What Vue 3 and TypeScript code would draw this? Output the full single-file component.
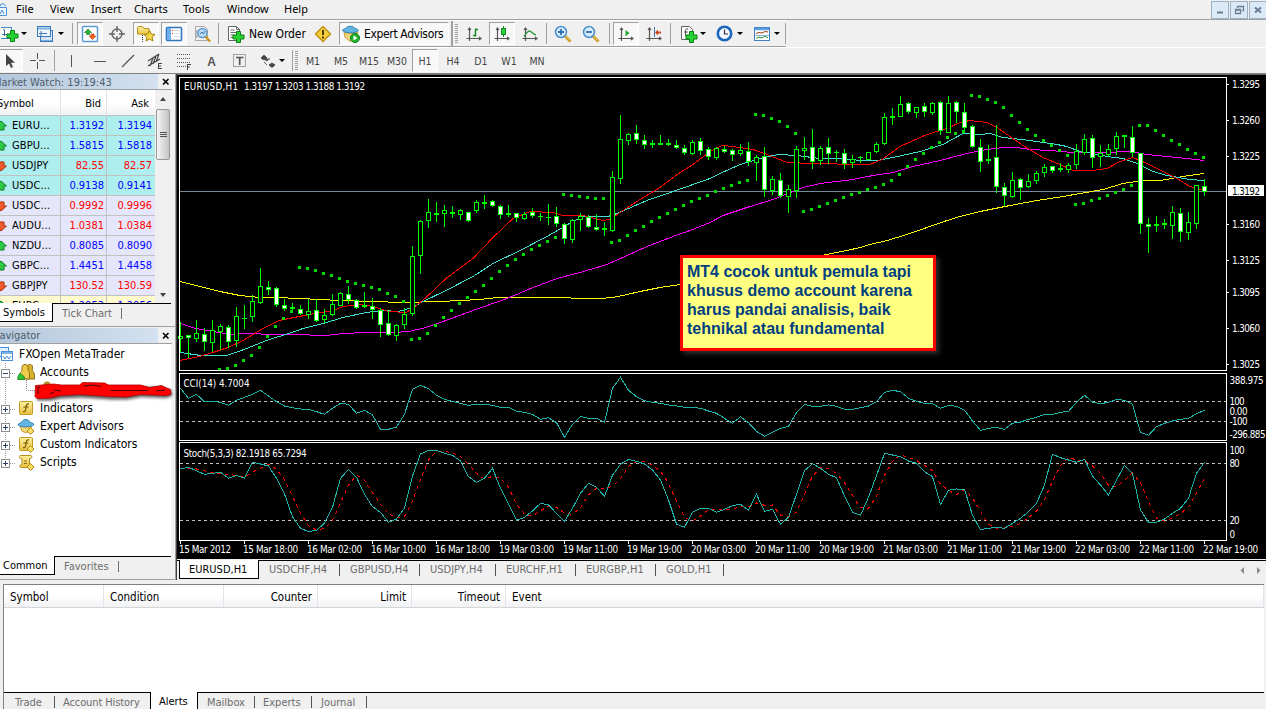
<script setup lang="ts">
import { computed } from 'vue'

interface Tool {
  icon?: string
  label?: string
  kind?: 'sep' | 'caret' | 'grip' | 'edge'
  gap?: number
  w: number
  on?: boolean
}

interface Quote {
  symbol: string
  bid: string
  ask: string
  up: boolean
  tone: string
}

// high, body top, body bottom, low, direction
type Candle = [number, number, number, number, 'u' | 'd' | 'x']

const menu = ['File', 'View', 'Insert', 'Charts', 'Tools', 'Window', 'Help']

const mainTools: Tool[] = [
  { icon: 'new-chart', w: 20 },
  { kind: 'caret', w: 8 },
  { icon: 'profiles', gap: 8, w: 18 },
  { kind: 'caret', gap: 3, w: 8 },
  { kind: 'sep', gap: 7, w: 1 },
  { icon: 'market', gap: 4, w: 26, on: true },
  { icon: 'target', gap: 5, w: 18 },
  { icon: 'folder', gap: 7, w: 26, on: true },
  { icon: 'terminal', gap: 2, w: 26, on: true },
  { icon: 'tester', gap: 6, w: 18 },
  { kind: 'sep', gap: 7, w: 1 },
  { icon: 'order', gap: 8, w: 18 },
  { label: 'New Order', gap: 4, w: 57 },
  { icon: 'warn', gap: 8, w: 18 },
  { icon: 'expert', label: 'Expert Advisors', gap: 7, w: 110, on: true },
  { kind: 'edge', gap: 2, w: 2 },
  { kind: 'grip', gap: 2, w: 3 },
  { icon: 'bars', gap: 7, w: 18 },
  { icon: 'candles', gap: 6, w: 26, on: true },
  { icon: 'line', gap: 6, w: 18 },
  { kind: 'sep', gap: 7, w: 1 },
  { icon: 'zoom-in', gap: 7, w: 18 },
  { icon: 'zoom-out', gap: 10, w: 18 },
  { kind: 'sep', gap: 9, w: 1 },
  { icon: 'scroll', gap: 3, w: 26, on: true },
  { icon: 'shift', gap: 6, w: 18 },
  { kind: 'sep', gap: 7, w: 1 },
  { icon: 'indicators', gap: 9, w: 18 },
  { kind: 'caret', gap: 1, w: 8 },
  { icon: 'clock', gap: 9, w: 18 },
  { kind: 'caret', gap: 2, w: 8 },
  { icon: 'template', gap: 9, w: 18 },
  { kind: 'caret', gap: 2, w: 8 },
  { kind: 'sep', gap: 4, w: 1 },
]

const drawTools: Tool[] = [
  { icon: 'cursor', gap: -4, w: 27, on: true },
  { icon: 'cross', gap: 6, w: 18 },
  { kind: 'sep', gap: 7, w: 1 },
  { icon: 'vline', gap: 7, w: 18 },
  { icon: 'hline', gap: 11, w: 18 },
  { icon: 'trend', gap: 10, w: 18 },
  { icon: 'channel', gap: 9, w: 18 },
  { icon: 'fibo', gap: 11, w: 18 },
  { icon: 'text', gap: 9, w: 18 },
  { icon: 'textlabel', gap: 11, w: 18 },
  { icon: 'arrows', gap: 10, w: 18 },
  { kind: 'caret', gap: 1, w: 8 },
  { kind: 'sep', gap: 6, w: 1 },
  { kind: 'grip', gap: 2, w: 3 },
]

const periods = ['M1', 'M5', 'M15', 'M30', 'H1', 'H4', 'D1', 'W1', 'MN']

const quotes: Quote[] = [
  { symbol: 'EURU...', bid: '1.3192', ask: '1.3194', up: true, tone: 'cyan' },
  { symbol: 'GBPU...', bid: '1.5815', ask: '1.5818', up: true, tone: 'cyan' },
  { symbol: 'USDJPY', bid: '82.55', ask: '82.57', up: false, tone: 'cyan' },
  { symbol: 'USDC...', bid: '0.9138', ask: '0.9141', up: true, tone: 'cyan' },
  { symbol: 'USDC...', bid: '0.9992', ask: '0.9996', up: false, tone: 'lavender' },
  { symbol: 'AUDU...', bid: '1.0381', ask: '1.0384', up: false, tone: 'lavender' },
  { symbol: 'NZDU...', bid: '0.8085', ask: '0.8090', up: true, tone: 'lavender' },
  { symbol: 'GBPC...', bid: '1.4451', ask: '1.4458', up: true, tone: 'lavender' },
  { symbol: 'GBPJPY', bid: '130.52', ask: '130.59', up: false, tone: 'lavender' },
  { symbol: 'EURC...', bid: '1.2053', ask: '1.2056', up: true, tone: 'lemon' },
]

const tree = [
  { label: 'Indicators', icon: 'fx' },
  { label: 'Expert Advisors', icon: 'hat' },
  { label: 'Custom Indicators', icon: 'fx-custom' },
  { label: 'Scripts', icon: 'script' },
]

const chartTabs = [
  { label: 'USDCHF,H4', w: 81 },
  { label: 'GBPUSD,H4', w: 80 },
  { label: 'USDJPY,H4', w: 76 },
  { label: 'EURCHF,H1', w: 80 },
  { label: 'EURGBP,H1', w: 80 },
  { label: 'GOLD,H1', w: 68 },
]

const alertCols = ['Symbol', 'Condition', 'Counter', 'Limit', 'Timeout', 'Event']

const STEP = 8
const X0 = 180

const candles: Candle[] = [
  [322, 336, 339, 352, 'u'], [335, 335, 338, 358, 'd'], [320, 333, 339, 342, 'u'], [328, 334, 342, 351, 'd'],
  [320, 330, 343, 352, 'u'], [324, 326, 332, 350, 'u'], [325, 327, 342, 348, 'd'], [307, 316, 341, 347, 'u'],
  [305, 318, 319, 329, 'x'], [295, 301, 317, 322, 'u'], [268, 286, 303, 304, 'u'], [281, 287, 290, 295, 'd'],
  [287, 288, 305, 307, 'd'], [299, 305, 309, 311, 'd'], [303, 307, 309, 312, 'x'], [305, 309, 314, 315, 'd'],
  [299, 311, 315, 319, 'u'], [299, 310, 321, 322, 'd'], [309, 315, 320, 323, 'u'], [294, 304, 315, 316, 'u'],
  [292, 293, 306, 306, 'u'], [286, 294, 300, 304, 'd'], [299, 300, 308, 309, 'd'], [292, 305, 307, 308, 'x'],
  [298, 306, 310, 319, 'd'], [308, 310, 325, 337, 'd'], [310, 323, 335, 336, 'd'], [324, 325, 336, 341, 'u'],
  [308, 314, 325, 329, 'u'], [246, 256, 314, 316, 'u'], [220, 221, 256, 274, 'u'], [199, 212, 221, 228, 'u'],
  [202, 213, 215, 222, 'x'], [205, 210, 214, 227, 'u'], [206, 212, 214, 218, 'x'], [209, 210, 215, 220, 'u'],
  [212, 212, 221, 222, 'd'], [200, 202, 211, 213, 'u'], [195, 202, 204, 209, 'x'], [200, 201, 206, 207, 'd'],
  [205, 206, 215, 219, 'd'], [205, 213, 215, 217, 'x'], [213, 213, 218, 222, 'd'], [212, 214, 219, 220, 'u'],
  [208, 212, 216, 218, 'd'], [213, 216, 217, 221, 'x'], [204, 217, 218, 225, 'x'], [207, 216, 224, 227, 'd'],
  [223, 224, 239, 244, 'd'], [219, 220, 240, 243, 'u'], [213, 216, 220, 231, 'u'], [215, 217, 227, 228, 'd'],
  [214, 227, 230, 231, 'd'], [222, 228, 230, 236, 'x'], [171, 177, 231, 232, 'u'], [115, 139, 179, 184, 'u'],
  [133, 134, 141, 145, 'u'], [125, 133, 140, 144, 'd'], [135, 140, 145, 149, 'd'], [140, 143, 145, 148, 'x'],
  [135, 143, 145, 145, 'x'], [139, 143, 145, 146, 'x'], [140, 145, 148, 149, 'd'], [145, 148, 153, 155, 'd'],
  [140, 142, 154, 155, 'u'], [138, 141, 151, 155, 'd'], [147, 149, 157, 160, 'd'], [147, 148, 158, 160, 'u'],
  [146, 149, 152, 153, 'd'], [149, 150, 155, 161, 'd'], [144, 150, 154, 156, 'u'], [142, 151, 162, 166, 'd'],
  [155, 157, 163, 181, 'u'], [147, 156, 190, 197, 'd'], [176, 179, 191, 195, 'u'], [173, 180, 196, 198, 'd'],
  [185, 189, 197, 213, 'u'], [146, 149, 191, 198, 'u'], [137, 148, 151, 160, 'u'], [129, 147, 162, 169, 'd'],
  [146, 148, 161, 165, 'u'], [138, 147, 154, 164, 'd'], [150, 152, 153, 162, 'x'], [149, 153, 164, 169, 'd'],
  [155, 159, 163, 168, 'u'], [156, 157, 158, 163, 'x'], [152, 152, 160, 160, 'u'], [142, 144, 152, 153, 'u'],
  [113, 117, 144, 145, 'u'], [108, 116, 118, 125, 'x'], [96, 104, 117, 117, 'u'], [102, 103, 112, 114, 'd'],
  [107, 107, 113, 118, 'u'], [103, 106, 112, 117, 'd'], [102, 103, 113, 115, 'u'], [101, 102, 131, 135, 'd'],
  [96, 103, 133, 133, 'u'], [101, 102, 112, 123, 'd'], [103, 112, 128, 130, 'd'], [125, 126, 147, 148, 'd'],
  [139, 147, 162, 172, 'd'], [145, 159, 161, 164, 'x'], [125, 157, 187, 193, 'd'], [183, 187, 196, 206, 'd'],
  [172, 180, 197, 198, 'u'], [178, 179, 188, 200, 'd'], [174, 181, 187, 188, 'u'], [171, 173, 181, 184, 'u'],
  [164, 167, 173, 177, 'u'], [166, 166, 171, 173, 'd'], [163, 168, 170, 172, 'x'], [163, 165, 170, 173, 'u'],
  [144, 151, 165, 169, 'u'], [134, 139, 153, 155, 'u'], [135, 138, 158, 168, 'd'], [145, 153, 157, 167, 'u'],
  [144, 149, 155, 157, 'u'], [132, 136, 149, 155, 'u'], [135, 135, 137, 148, 'x'], [126, 137, 153, 157, 'd'],
  [153, 153, 224, 234, 'd'], [218, 224, 227, 253, 'd'], [216, 224, 226, 232, 'x'], [219, 223, 225, 229, 'x'],
  [206, 212, 226, 239, 'u'], [208, 213, 232, 242, 'd'], [212, 222, 233, 240, 'u'], [185, 185, 224, 229, 'u'],
  [179, 186, 192, 196, 'd'],
]

// one entry per bar starting at bar 5
const sar = [
  369, 368, 365, 360, 355, 347, 336, 326, 318, 311, 267, 268, 270, 273, 275, 278, 281, 283, 285, 287, 289, 293, 296, 301,
  339, 338, 333, 325, 317, 310, 303, 297, 291, 285, 278, 271, 265, 259, 254, 249, 245, 241, 237, 194, 195, 196, 197, 198,
  198, 242, 240, 235, 230, 226, 221, 217, 213, 209, 205, 201, 198, 195, 191, 188, 185, 182, 180, 114, 115, 118, 121, 126,
  133, 211, 209, 206, 203, 200, 197, 194, 192, 189, 187, 184, 180, 174, 166, 159, 153, 147, 142, 137, 133, 131, 95, 96,
  99, 102, 107, 115, 122, 129, 135, 140, 145, 150, 155, 204, 203, 200, 198, 195, 192, 189, 185, 125, 125, 130, 135, 140,
  144, 149, 153, 157,
]

const averages = [
  {
    color: '#ffff00',
    points:
      '180,281 200,286 220,291 240,295 260,297 276,297 300,298 320,299 340,300 376,301 400,302 440,301 480,299 497,297 569,297 573,298 600,298 613,297 627,294 640,291 660,287 680,284 740,274 790,263 826,254 847,250 860,247 870,244 887,240 907,234 927,227 947,220 960,216 980,211 1010,205 1037,200 1063,196 1103,189 1123,183 1143,180 1160,180 1183,176 1204,173',
  },
  {
    color: '#ff00ff',
    points:
      '180,323 196,328 213,331 231,334 243,333 256,333 266,334 303,334 316,335 326,335 343,333 366,332 393,332 409,331 426,327 446,320 473,310 507,298 533,287 557,278 580,272 607,264 627,255 647,246 673,236 690,230 710,222 723,215 750,206 773,199 788,193 803,187 820,183 853,179 873,175 893,172 913,166 940,160 963,154 980,150 1003,147 1017,147 1030,149 1050,150 1073,152 1103,152 1130,151 1147,154 1167,156 1187,158 1204,160',
  },
  {
    color: '#40e0d0',
    points:
      '180,352 201,355 226,355 236,352 249,347 269,339 289,333 303,328 323,323 343,317 366,312 383,310 398,311 413,307 421,302 446,290 473,276 493,263 520,250 547,236 573,221 583,216 608,216 617,213 647,200 673,191 710,178 720,173 740,164 760,158 778,154 797,155 820,158 843,158 860,160 877,160 893,157 920,151 943,144 963,133 980,134 990,133 1003,137 1030,140 1057,144 1067,146 1080,151 1093,153 1107,156 1123,158 1137,163 1153,171 1167,175 1190,179 1204,180',
  },
  {
    color: '#ff0000',
    points:
      '180,360 199,356 213,352 228,347 243,340 263,328 279,320 309,314 333,310 343,306 359,304 373,306 389,311 406,312 414,307 426,297 446,278 473,258 493,237 513,218 530,211 553,212 563,215 583,215 603,220 610,219 620,212 640,199 660,187 677,174 693,164 710,151 722,145 733,146 753,149 767,154 787,162 813,163 860,164 870,164 882,159 900,146 927,134 947,128 960,122 970,120 987,122 997,127 1007,134 1023,145 1043,157 1060,164 1073,170 1093,170 1107,168 1120,161 1133,157 1147,163 1167,173 1177,178 1190,186 1204,190',
  },
]

// oscillator samples, three units per pixel measured from OSC_TOP
const OSC_TOP = 370
const cci = [
  55, 85, 73, 96, 94, 97, 106, 91, 82, 73, 61, 78, 95, 108, 113, 117, 118, 125, 133, 115, 100, 103, 130, 121, 135, 178,
  178, 171, 133, 58, 46, 56, 76, 88, 94, 100, 106, 103, 103, 106, 112, 112, 124, 127, 133, 148, 143, 158, 202, 163, 139,
  145, 145, 157, 55, 22, 61, 80, 92, 97, 100, 105, 108, 112, 112, 115, 123, 130, 145, 160, 140, 158, 184, 199, 187, 175,
  169, 128, 103, 109, 109, 105, 109, 118, 118, 113, 108, 95, 67, 61, 65, 85, 94, 100, 101, 115, 106, 109, 121, 153, 181,
  175, 172, 178, 160, 156, 148, 142, 133, 133, 127, 124, 97, 76, 96, 101, 97, 88, 91, 103, 187, 196, 170, 160, 153, 148,
  145, 131, 121,
]
const stoch = [
  297, 292, 302, 313, 310, 307, 325, 316, 325, 277, 282, 288, 325, 372, 440, 475, 485, 481, 460, 412, 325, 298, 322, 373,
  410, 427, 457, 447, 415, 318, 252, 241, 241, 250, 256, 273, 320, 337, 325, 295, 355, 403, 451, 442, 423, 400, 405, 430,
  454, 415, 370, 340, 352, 379, 316, 283, 268, 274, 282, 300, 330, 390, 462, 472, 427, 415, 415, 427, 418, 407, 403, 421,
  373, 424, 418, 463, 442, 373, 302, 281, 295, 313, 323, 378, 427, 436, 382, 317, 250, 255, 260, 273, 280, 305, 320, 403,
  361, 357, 358, 436, 479, 475, 472, 475, 460, 445, 425, 400, 345, 253, 263, 270, 277, 268, 318, 345, 375, 330, 286, 310,
  420, 457, 457, 447, 430, 415, 385, 310, 277,
]

function toPoints(values: number[]): string {
  return values.map((v, i) => `${X0 + i * STEP + 0.5},${(OSC_TOP + v / 3).toFixed(1)}`).join(' ')
}

const cciPoints = computed(() => toPoints(cci))
const stochPoints = computed(() => toPoints(stoch))
const signalPoints = computed(() =>
  toPoints(
    stoch.map((v, i) => {
      const a = stoch[Math.max(0, i - 1)]
      const b = stoch[Math.max(0, i - 2)]
      return (v + a + b) / 3
    }),
  ),
)

const bars = computed(() =>
  candles.map(([high, top, bottom, low, dir], i) => ({
    x: X0 + i * STEP,
    wickTop: Math.min(high, top),
    wickEnd: Math.max(low, bottom),
    top,
    h: Math.max(bottom - top, 1),
    dir,
  })),
)

const priceScale = [
  ['1.3295', 84], ['1.3260', 120], ['1.3225', 156], ['1.3160', 224],
  ['1.3125', 260], ['1.3095', 292], ['1.3060', 328], ['1.3025', 364],
] as [string, number][]

const oscScale = [
  ['388.975', 380, 34], ['100', 401, 15], ['0.00', 411, 18], ['-100', 421, 18], ['-296.885', 434, 36],
  ['100', 450, 15], ['80', 463, 10], ['20', 520, 10], ['0', 534, 5],
] as [string, number, number][]

const times = [
  '15 Mar 2012', '15 Mar 18:00', '16 Mar 02:00', '16 Mar 10:00', '16 Mar 18:00', '19 Mar 03:00', '19 Mar 11:00',
  '19 Mar 19:00', '20 Mar 03:00', '20 Mar 11:00', '20 Mar 19:00', '21 Mar 03:00', '21 Mar 11:00', '21 Mar 19:00',
  '22 Mar 03:00', '22 Mar 11:00', '22 Mar 19:00',
]
</script>

<template>
  <svg class="defs" width="0" height="0">
    <defs>
      <linearGradient id="gold" x1="0" y1="0" x2="0" y2="1">
        <stop offset="0" stop-color="#fdf0a0" /><stop offset="1" stop-color="#e8c040" />
      </linearGradient>
      <filter id="soft" x="-10%" y="-50%" width="120%" height="200%"><feGaussianBlur stdDeviation="1.500" /></filter>
      <symbol id="new-chart" viewBox="0 0 18 18">
        <rect x="-3.500" y="2.500" width="14" height="11" fill="#fff" stroke="#3f86c4" />
        <path d="M3.500 5v6M1 9.500h8M2 5l1.500-1" stroke="#3f6d9c" fill="none" />
        <path d="M9.500 5.500h4V9H17v4h-3.500v3.500h-4V13H6V9h3.500z" fill="#27d234" stroke="#0a7f14" />
      </symbol>
      <symbol id="profiles" viewBox="0 0 18 18">
        <rect x="4.500" y="5.500" width="12" height="11" fill="#d6e8f8" stroke="#3a78b8" />
        <path d="M5 15.500h11" stroke="#7cb0e0" />
        <rect x="1.500" y="1.500" width="13" height="10" fill="#eef6fd" stroke="#3a78b8" />
        <path d="M2 3.500h12" stroke="#7cb0e0" stroke-width="2" />
        <path d="M3 8.500h8M5 6v5" stroke="#4a7ab0" />
      </symbol>
      <symbol id="market" viewBox="0 0 18 18">
        <rect x="1.500" y="1.500" width="15" height="15" rx="1" fill="#fff" stroke="#5c9ad6" stroke-width="1.500" />
        <path d="M7 4l3.500 3.500H8.500v2h-3v-2H3.500z" fill="#26b035" stroke="#137c1d" stroke-width=".6" />
        <path d="M11.500 14.500L15 11h-2V9h-3v2H8z" fill="#f4622a" stroke="#b83808" stroke-width=".6" />
      </symbol>
      <symbol id="target" viewBox="0 0 18 18">
        <circle cx="9" cy="9" r="5" fill="none" stroke="#666" stroke-width="1.400" />
        <path d="M9 1v6M9 11v6M1 9h6M11 9h6" stroke="#666" stroke-width="1.400" />
      </symbol>
      <symbol id="folder" viewBox="0 0 18 18">
        <path d="M.5 9V2.500l1-1h4l1.500 2h5v6z" fill="url(#gold)" stroke="#b98d1a" />
        <path d="M5.500 10v7" stroke="#333" stroke-dasharray="1 1" />
        <path d="M12.500 5.500l1.700 3.600 3.800.4-2.900 2.600.9 3.900-3.500-2-3.500 2 .9-3.900L7 9.500l3.800-.4z" fill="#f7d84a" stroke="#a8800c" />
      </symbol>
      <symbol id="terminal" viewBox="0 0 18 18">
        <rect x="1.500" y="2.500" width="15" height="13" rx="1" fill="#fff" stroke="#2f78c0" stroke-width="1.600" />
        <rect x="2" y="3" width="4" height="12" fill="#6fb0ea" />
        <path d="M7 5.500h1M7 8.500h1" stroke="#d22" /><path d="M9 5.500h6M9 8.500h6M9 11.500h6" stroke="#d3e0f3" />
      </symbol>
      <symbol id="tester" viewBox="0 0 18 18">
        <path d="M2.500 1.500h9l3 3v11h-12z" fill="#f2f2f2" stroke="#aaa" />
        <path d="M4 5v8M7 4v9" stroke="#888" />
        <circle cx="9.500" cy="8" r="4.500" fill="#bcdcf6" stroke="#5b96cc" stroke-width="1.300" />
        <path d="M7 9l2-2 1.500 2L12 6" stroke="#3770ad" fill="none" />
        <path d="M12.500 11.500l4.500 5" stroke="#c9971c" stroke-width="2.500" />
      </symbol>
      <symbol id="order" viewBox="0 0 18 18">
        <path d="M1.500 1.500h8l3 3v11h-11z" fill="#fff" stroke="#666" />
        <path d="M9.500 1.500v3h3M3.500 5h4M3.500 7.500h6M3.500 10h4M3.500 12.500h3" stroke="#666" fill="none" />
        <path d="M9.500 6.500h4V10H17v4h-3.500v3.500h-4V14H6v-4h3.500z" fill="#27d234" stroke="#0a7f14" />
      </symbol>
      <symbol id="warn" viewBox="0 0 18 18">
        <path d="M9 1.500L16.500 9 9 16.500 1.500 9z" fill="#f6cf3c" stroke="#c0921a" stroke-linejoin="round" stroke-width="1.500" />
        <path d="M9 5v5M9 11.500v2" stroke="#503a00" stroke-width="2" />
      </symbol>
      <symbol id="expert" viewBox="0 0 18 18">
        <path d="M2 7c3 2 10 2 14 0l-3 6-5 3.500L3 12z" fill="#f2d77a" stroke="#c79c3a" />
        <path d="M.5 5.500C1 3.500 4 4 4.500 2.500 6 .8 11 .8 12 2.500c.5 1.500 4 1 4.500 3-2 3-14 3-16 0z" fill="#5fb4e2" stroke="#3783b4" />
        <circle cx="13" cy="13" r="4.500" fill="#1fb62c" stroke="#0d7a17" />
        <path d="M11.500 10.500v5l4-2.500z" fill="#fff" />
      </symbol>
      <symbol id="axes" viewBox="0 0 18 18">
        <path d="M4.500 3v13M1.500 13.500h14M3 5l1.500-2L6 5M14 12l2 1.500-2 1.500" stroke="#555" fill="none" stroke-width="1.200" />
      </symbol>
      <symbol id="bars" viewBox="0 0 18 18">
        <use href="#axes" width="18" height="18" />
        <path d="M10.500 3.500v8M8 10.500h2.500M10.500 4.500H13" stroke="#138a22" stroke-width="1.500" />
      </symbol>
      <symbol id="candles" viewBox="0 0 18 18">
        <use href="#axes" width="18" height="18" />
        <path d="M10.500 1v11" stroke="#138a22" /><rect x="8.500" y="3.500" width="4" height="6" fill="#2fd03c" stroke="#138a22" />
      </symbol>
      <symbol id="line" viewBox="0 0 18 18">
        <use href="#axes" width="18" height="18" />
        <path d="M3 11.500C5 9 6.500 6 8.500 6c2 0 3 3.500 6.500 4" stroke="#2d9a3a" stroke-width="1.400" fill="none" />
      </symbol>
      <symbol id="zoom-in" viewBox="0 0 18 18">
        <path d="M11 11l5.500 5.500" stroke="#c9971c" stroke-width="3" /><path d="M11.500 11l4.500 4.500" stroke="#f6df75" />
        <circle cx="7" cy="7" r="5.500" fill="#d5ebfb" stroke="#4a8ec8" stroke-width="1.500" />
        <path d="M4 7h6M7 4v6" stroke="#2e6fae" stroke-width="1.800" />
      </symbol>
      <symbol id="zoom-out" viewBox="0 0 18 18">
        <path d="M11 11l5.500 5.500" stroke="#c9971c" stroke-width="3" /><path d="M11.500 11l4.500 4.500" stroke="#f6df75" />
        <circle cx="7" cy="7" r="5.500" fill="#d5ebfb" stroke="#4a8ec8" stroke-width="1.500" />
        <path d="M4 7h6" stroke="#2e6fae" stroke-width="1.800" />
      </symbol>
      <symbol id="scroll" viewBox="0 0 18 18">
        <use href="#axes" width="18" height="18" /><path d="M8.500 5v6.500L12.500 8z" fill="#22a532" />
      </symbol>
      <symbol id="shift" viewBox="0 0 18 18">
        <use href="#axes" width="18" height="18" /><path d="M9.500 2v10" stroke="#3a75b5" />
        <path d="M10 7.500l3-3v2h3v2h-3v2z" fill="#c8441a" />
      </symbol>
      <symbol id="indicators" viewBox="0 0 18 18">
        <path d="M1.500 1.500h8l3 3v10h-11z" fill="#fff" stroke="#666" />
        <path d="M8 4c-2-.5-2.500.5-2.500 2v5M4 7h4" stroke="#555" fill="none" />
        <path d="M9.500 6.500h4V10H17v4h-3.500v3.500h-4V14H6v-4h3.500z" fill="#27d234" stroke="#0a7f14" />
      </symbol>
      <symbol id="clock" viewBox="0 0 18 18">
        <circle cx="8.500" cy="8.500" r="6.700" fill="#f2f8fd" stroke="#1d66bd" stroke-width="2.600" />
        <path d="M8.500 4.500v4.500H12" stroke="#333" fill="none" stroke-width="1.200" />
      </symbol>
      <symbol id="template" viewBox="0 0 18 18">
        <rect x="1.500" y="2.500" width="15" height="13" fill="#fff" stroke="#3f7fc0" />
        <path d="M2 4h14" stroke="#5c9ee0" stroke-width="2.500" />
        <path d="M3 8.500l3-1 3 .5 3-1.500 3 .5" stroke="#a03c1c" fill="none" />
        <path d="M3 13.500l3-1.500 3 1 3-2 3 2" stroke="#209030" fill="none" />
        <path d="M2 10.500h14" stroke="#8cb4dc" />
      </symbol>
      <symbol id="cursor" viewBox="0 0 18 18">
        <path d="M5 2v12l3-2.500L10 16l2-1-2-4.200h4z" fill="#444" />
      </symbol>
      <symbol id="cross" viewBox="0 0 18 18">
        <path d="M8.500 1v6M8.500 10v7M1 8.500h6M10 8.500h6" stroke="#555" />
      </symbol>
      <symbol id="vline" viewBox="0 0 18 18"><path d="M9.500 3v12" stroke="#555" /></symbol>
      <symbol id="hline" viewBox="0 0 18 18"><path d="M3 9.500h12" stroke="#555" /></symbol>
      <symbol id="trend" viewBox="0 0 18 18"><path d="M3 15L15 3" stroke="#555" stroke-width="1.200" /></symbol>
      <symbol id="channel" viewBox="0 0 18 18">
        <path d="M2 9l11-7M2 14l12-7M4 14l3-8M7 12l3-8M10 10l3-8" stroke="#444" stroke-width="1.200" />
        <path d="M12.500 11v6M12.500 11.500H16M12.500 14H15M12.500 16.500H16" stroke="#444" />
      </symbol>
      <symbol id="fibo" viewBox="0 0 18 18">
        <path d="M2 2.500h14M2 6.500h14M2 10.500h14M2 14.500h9" stroke="#555" stroke-dasharray="1 1" />
        <path d="M12.500 12v6M12.500 12.500H16M12.500 15H15" stroke="#444" />
      </symbol>
      <symbol id="text" viewBox="0 0 18 18">
        <text x="5.300" y="14" font-family="Liberation Sans" font-size="12" font-weight="bold" fill="#555">A</text>
      </symbol>
      <symbol id="textlabel" viewBox="0 0 18 18">
        <rect x="2.500" y="2.500" width="12" height="12" fill="none" stroke="#555" stroke-dasharray="1 1" />
        <path d="M5 5.500h7.500M8.700 5v8" stroke="#555" stroke-width="1.700" />
      </symbol>
      <symbol id="arrows" viewBox="0 0 18 18">
        <path d="M2 6l3-3 3 3-3 2zM10 13l3-2 3 2-3 2.500zM6 7l1.500 2L11 6.500M5 10l3 3" fill="#444" stroke="#444" stroke-width=".8" />
      </symbol>
      <symbol id="up" viewBox="0 0 14 14">
        <path d="M6 2l5.500 5H9v4H3V7H.5z" fill="#2bc944" stroke="#0c7a22" />
      </symbol>
      <symbol id="down" viewBox="0 0 14 14">
        <path d="M6 12l5.500-5H9V3H3v4H.5z" fill="#f25a2c" stroke="#a32c08" />
      </symbol>
      <symbol id="people" viewBox="0 0 18 18">
        <path d="M9 16V8c0-1 1-2 1-4 0-3.500 5.500-3.500 5.500 0 0 2-.5 3 0 4 2 1 2 4 2 8z" fill="#d9b22c" stroke="#8f7010" />
        <path d="M3.500 16V9.500C5 8.500 5 7 5 4.500c0-4 6-4 6 0 0 2.500 0 4 1.500 5V16z" fill="#eecb4c" stroke="#8f7010" />
        <path d="M.8 16.500c0-3 .5-5 2.200-6 1-.6 1.500 1.500 3 2 1 .5 1.500 2 1.500 4z" fill="#2cc234" stroke="#128018" stroke-width=".8" />
      </symbol>
      <symbol id="fx" viewBox="0 0 18 18">
        <rect x="2.500" y="2.500" width="13" height="13" rx="1" fill="url(#gold)" stroke="#c39a22" />
        <path d="M12 5c-3-1-2.500 2-3.500 6-.3 1.500-1 2-2.500 1.500M6.500 8h5" stroke="#7a5a00" fill="none" stroke-width="1.200" />
      </symbol>
      <symbol id="fx-custom" viewBox="0 0 18 18">
        <use href="#fx" width="18" height="18" />
        <path d="M13.500 10.500l3.500 3.500-3.500 3.500L10 14z" fill="#f7dc62" stroke="#b08a18" />
      </symbol>
      <symbol id="hat" viewBox="0 0 18 18">
        <path d="M3 9c3 1.500 9 1.500 12 0l-3 5-3 2-4-2z" fill="#f2d77a" stroke="#c79c3a" />
        <path d="M1 8c0-2 4-2 4.500-4C7 2 11 2 12 4c.5 2 5 2 5 3.500-3 3-14 3-16 .5z" fill="#62b6e6" stroke="#3783b4" />
        <path d="M13.500 10.500l3.500 3.500-3.500 3.500L10 14z" fill="#f7dc62" stroke="#b08a18" />
      </symbol>
      <symbol id="script" viewBox="0 0 18 18">
        <path d="M3.500 2.500h10c2 0 1.500 3 0 3h-1v9h-8c-2.500 0-2-3 0-3h.5v-6H4c-2 0-2-3-.5-3z" fill="url(#gold)" stroke="#b58c1c" />
        <path d="M7 8h3M7 10.500h3" stroke="#8a6a10" />
        <path d="M13.500 10.500l3.500 3.500-3.500 3.500L10 14z" fill="#f7dc62" stroke="#b08a18" />
      </symbol>
      <symbol id="close" viewBox="0 0 8 8">
        <path d="M1 1l5.500 5.500M6.500 1L1 6.500" stroke="#000" stroke-width="1.600" />
      </symbol>
    </defs>
  </svg>

  <div class="app">
    <header class="menubar">
      <svg class="doc-icon" width="8" height="16" viewBox="0 0 8 16">
        <path d="M-4 13.500V5.500h10.500v8zM0 5.500V3l3-1.500L6 4" fill="#eef6ff" stroke="#4a90d9" />
        <path d="M0 12l2-4 2 4" stroke="#4a90d9" fill="none" />
      </svg>
      <span v-for="m in menu" :key="m" class="menu-item" :class="'m-' + m.toLowerCase()">{{ m }}</span>
      <div class="win-buttons">
        <button><svg width="12" height="12"><path d="M3 8.500h6" stroke="#6b7f93" stroke-width="2" /></svg></button>
        <button>
          <svg width="12" height="12"><path d="M4.500 4V2.500h6v4H9M2.500 5.500h5v4h-5zM2 6h6" fill="none" stroke="#6b7f93" stroke-width="1.300" /></svg>
        </button>
        <button><svg width="12" height="12"><path d="M3 3.500l6 5M9 3.500l-6 5" stroke="#6b7f93" stroke-width="2" /></svg></button>
      </div>
    </header>

    <div class="toolbar">
      <div
        v-for="(t, i) in mainTools"
        :key="i"
        class="tool"
        :class="[t.kind, { on: t.on, labelled: t.label }]"
        :style="{ width: t.w + 'px', marginLeft: (t.gap ?? 0) + 'px' }"
      >
        <svg v-if="t.icon" width="18" height="18"><use :href="'#' + t.icon" width="18" height="18" /></svg>
        <span v-if="t.label">{{ t.label }}</span>
      </div>
    </div>

    <div class="toolbar second">
      <div
        v-for="(t, i) in drawTools"
        :key="i"
        class="tool"
        :class="[t.kind, { on: t.on }]"
        :style="{ width: t.w + 'px', marginLeft: (t.gap ?? 0) + 'px' }"
      >
        <svg v-if="t.icon" width="18" height="18"><use :href="'#' + t.icon" width="18" height="18" /></svg>
      </div>
      <div class="periods">
        <div v-for="p in periods" :key="p" class="period"><span :class="{ on: p === 'H1' }">{{ p }}</span></div>
      </div>
      <div class="tool sep" />
    </div>

    <div class="workspace">
      <aside class="side">
        <section class="market">
          <div class="panel-title">
            <span class="shift-title">Market Watch: 19:19:43</span>
            <svg class="close" width="8" height="8"><use href="#close" width="8" height="8" /></svg>
          </div>
          <div class="market-body">
            <div class="grid">
              <div class="row head"><span>Symbol</span><span>Bid</span><span>Ask</span></div>
              <div v-for="(q, i) in quotes" :key="i" class="row" :class="[q.tone, q.up ? 'rise' : 'fall']">
                <span class="sym">
                  <svg width="14" height="14"><use :href="q.up ? '#up' : '#down'" width="14" height="14" /></svg>{{ q.symbol }}
                </span>
                <span>{{ q.bid }}</span>
                <span>{{ q.ask }}</span>
              </div>
            </div>
            <div class="scroll">
              <b class="arrow-up" />
              <div class="thumb"><i /><i /><i /></div>
              <b class="arrow-down" />
            </div>
          </div>
          <div class="tabs">
            <span class="tab active sym-tab">Symbols</span>
            <span class="tab">Tick Chart</span>
          </div>
        </section>

        <section class="navigator">
          <div class="panel-title">
            <span class="shift-nav">Navigator</span>
            <svg class="close" width="8" height="8"><use href="#close" width="8" height="8" /></svg>
          </div>
          <div class="tree">
            <div class="node root">
              <svg width="14" height="16" viewBox="0 0 14 16">
                <rect x="-3.500" y="1.500" width="12" height="9" fill="#e4f1fc" stroke="#4a90d9" />
                <rect x="1.500" y="5.500" width="11" height="9" fill="#fff" stroke="#4a90d9" />
                <path d="M2 7h10" stroke="#7db4e8" stroke-width="2" /><path d="M3 10l2 3 2-3 2 3 2-3" stroke="#4a90d9" fill="none" />
              </svg>
              <span>FXOpen MetaTrader</span>
            </div>
            <div class="node branch">
              <b class="box minus" /><svg width="18" height="18"><use href="#people" width="18" height="18" /></svg>
              <span>Accounts</span>
            </div>
            <div class="node account">
              <svg width="150" height="24" viewBox="26 378 150 24">
                <path d="M26.500 378v12.500h9" stroke="#888" stroke-dasharray="1 1" fill="none" />
                <path
                  d="M38 388l40-1 30 0 34 0 20 0 10 4 0 5-6 2-25-1-14 2.500-16 0-30-2-20 1-10 2-14 0z"
                  fill="#222"
                  opacity=".75"
                  filter="url(#soft)"
                />
                <circle cx="47" cy="385" r="3.500" fill="#b08a20" />
                <path
                  d="M35.500 385.500l18-1.500 8 1 18 0 3-2.500 22 .5 4 2 32 0 9 2.500 12-2 5 2.500 4 1.500 .5 5-5 1-25-1-15 2.500-16-.5-30-2-20 1-10 2.500-13 .5-2-2z"
                  fill="#ff0000"
                  stroke="#b40000"
                  stroke-width=".8"
                />
                <path d="M84 386l8-1 9 1.500M111 390.500h37M156 391l9-1M54 390l7 1M40 387h-2v7M50 394l4-2" stroke="#400808" fill="none" />
              </svg>
            </div>
            <div v-for="n in tree" :key="n.label" class="node branch">
              <b class="box plus" /><svg width="18" height="18"><use :href="'#' + n.icon" width="18" height="18" /></svg>
              <span>{{ n.label }}</span>
            </div>
          </div>
          <div class="tabs nav-tabs">
            <span class="tab active nav-tab">Common</span>
            <span class="tab">Favorites</span>
          </div>
        </section>
      </aside>

      <main class="charts">
        <div class="chart-window">
          <svg class="chart" width="1089" height="484" viewBox="177 75 1089 484">
            <rect x="177" y="75" width="1089" height="484" fill="#000" />
            <g shape-rendering="crispEdges" fill="none">
              <path d="M180 191.500H1226" stroke="#778899" />
              <polyline v-for="a in averages" :key="a.color" :points="a.points" :stroke="a.color" transform="translate(0 .5)" />
              <path d="M180 401.500H1226M180 421.500H1226M180 463.500H1226M180 520.500H1226" stroke="#c0c0c0" stroke-dasharray="3 3" />
              <polyline :points="cciPoints" stroke="#20b2aa" />
              <polyline :points="signalPoints" stroke="#ff0000" stroke-dasharray="3.500 4" />
              <polyline :points="stochPoints" stroke="#20b2aa" />
            </g>
            <g shape-rendering="crispEdges">
              <template v-for="b in bars" :key="b.x">
                <rect :x="b.x" :y="b.wickTop" width="1" :height="b.wickEnd - b.wickTop" fill="#00ff00" />
                <rect v-if="b.dir === 'x'" :x="b.x - 2" :y="b.top" width="5" :height="b.h" fill="#00ff00" />
                <rect
                  v-else
                  :x="b.x - 1.5"
                  :y="b.top + 0.5"
                  width="4"
                  :height="b.h - 1"
                  :fill="b.dir === 'u' ? '#000' : '#fff'"
                  stroke="#00ff00"
                />
              </template>
              <rect v-for="(y, i) in sar" :key="'s' + i" :x="X0 + (i + 5) * STEP - 2" :y="y - 1" width="3" height="3" fill="#00dc00" />
              <rect x="178" y="371" width="1048" height="2" fill="#000" />
              <path
                d="M179.500 77.500H1226.500V370.500H179.500zM179.500 373.500H1226.500V440.500H179.500zM179.500 442.500H1226.500V540.500H179.500z"
                fill="none"
                stroke="#fff"
              />
              <rect v-for="(t, i) in times" :key="t" :x="180 + i * 64" y="541" width="1" height="3" fill="#fff" />
              <rect v-for="p in priceScale" :key="p[0]" x="1227" :y="p[1]" width="2" height="1" fill="#fff" />
              <rect x="1228" y="185" width="36" height="11" fill="#fff" />
            </g>
            <g class="chart-text">
              <text x="184" y="89.500" textLength="54">EURUSD,H1</text>
              <text x="244" y="89.500" textLength="121">1.3197 1.3203 1.3188 1.3192</text>
              <text x="183.500" y="386.500" textLength="66">CCI(14) 4.7004</text>
              <text x="183.500" y="456.500" textLength="123">Stoch(5,3,3) 82.1918 65.7294</text>
              <text v-for="p in priceScale" :key="p[0]" x="1232" :y="p[1] + 3.5" textLength="28">{{ p[0] }}</text>
              <text x="1232" y="194.500" textLength="28" class="now">1.3192</text>
              <text v-for="(o, i) in oscScale" :key="i" x="1229.500" :y="o[1] + 3.5" :textLength="o[2]">{{ o[0] }}</text>
              <text v-for="(t, i) in times" :key="t" :x="179 + i * 64" y="553" :textLength="i ? 55 : 52">{{ t }}</text>
            </g>
          </svg>
          <div class="note">MT4 cocok untuk pemula tapi<br />khusus demo account karena<br />harus pandai analisis, baik<br />tehnikal atau fundamental</div>
        </div>
        <div class="chart-tabs">
          <span class="chart-tab active">EURUSD,H1</span>
          <span v-for="t in chartTabs" :key="t.label" class="chart-tab" :style="{ width: t.w + 'px' }">{{ t.label }}</span>
          <svg class="pager" width="24" height="10">
            <path d="M5 1v7L1.500 4.500z" fill="#8a8a8a" /><path d="M18 1v7l3.500-3.500z" fill="#8a8a8a" />
          </svg>
        </div>
      </main>
    </div>

    <footer class="terminal">
      <div class="alerts">
        <div class="alert-head"><span v-for="c in alertCols" :key="c" :class="c.toLowerCase()">{{ c }}</span></div>
        <div class="alert-body" />
        <div class="term-tabs">
          <span class="t trade">Trade</span>
          <span class="t history">Account History</span>
          <span class="t current">Alerts</span>
          <span class="t mailbox">Mailbox</span>
          <span class="t experts">Experts</span>
          <span class="t journal">Journal</span>
        </div>
      </div>
    </footer>
  </div>
</template>

<style>
body { margin: 0; overflow: hidden; }
</style>

<style scoped>
.defs { position: absolute; }
.app {
  width: 1266px;
  height: 709px;
  overflow: hidden;
  background: #f0f0f0;
  display: flex;
  flex-direction: column;
  font-family: "DejaVu Sans Condensed", "DejaVu Sans", "Noto Sans", sans-serif;
  font-size: 11px;
  color: #000;
  white-space: nowrap;
}

.menubar {
  height: 19px;
  display: flex;
  align-items: center;
  border-bottom: 1px solid #a0a0a0;
  font-family: "Noto Sans", sans-serif;
  font-size: 11px;
  flex: none;
}
.doc-icon { margin-right: 8px; }
.menu-item { line-height: 16px; padding-bottom: 2px; flex: none; }
.m-file { width: 34px; }
.m-view { width: 41px; }
.m-insert { width: 43px; }
.m-charts { width: 49px; }
.m-tools { width: 44px; }
.m-window { width: 57px; }
.win-buttons { margin-left: auto; display: flex; gap: 1px; margin-right: -1px; }
.win-buttons button {
  width: 18px;
  height: 18px;
  padding: 0;
  border: 1px solid #9db0c6;
  background: #dce9f7;
  display: flex;
  align-items: center;
  justify-content: center;
}

.toolbar {
  height: 27px;
  display: flex;
  align-items: center;
  border-top: 1px solid #fff;
  border-bottom: 1px solid #a0a0a0;
  box-sizing: border-box;
  flex: none;
}
.toolbar:not(.second) { width: 786px; }
.toolbar.second { width: 1266px; border-bottom: 1px solid #808080; }
.tool { display: flex; align-items: center; justify-content: center; flex: none; box-sizing: border-box; height: 23px; overflow: hidden; }
.tool svg { flex: none; }
.tool.on, .period .on {
  background: #f8f8f8;
  border: 1px solid #a0a0a0;
  border-right-color: #fff;
  border-bottom-color: #fff;
}
.labelled { font-size: 12px; justify-content: flex-start; letter-spacing: -0.1px; }
.labelled.on { letter-spacing: -0.35px; }
.labelled svg { margin: 0 4px 0 2px; }
.sep { background: #a0a0a0; height: 21px; }
.edge { background: #a0a0a0; height: 25px; }
.grip { height: 19px; background: repeating-linear-gradient(#a0a0a0 0 1px, #f0f0f0 1px 2px); }
.caret::after { content: ""; border: 3px solid transparent; border-top-color: #000; border-bottom: 0; }
.periods { display: flex; margin-left: 1px; }
.period { width: 28px; flex: none; display: flex; justify-content: center; font-size: 10.5px; color: #444; }
.period span { box-sizing: border-box; width: 26px; height: 23px; line-height: 24px; text-align: center; }
.period .on { line-height: 22px; }

.workspace { display: flex; height: 506px; flex: none; }
.side { width: 176px; display: flex; flex-direction: column; box-sizing: border-box; flex: none; border-right: 1px solid #a0a0a0; }
.panel-title {
  height: 16px;
  width: 172px;
  display: flex;
  align-items: center;
  justify-content: space-between;
  background: linear-gradient(90deg, #b5c7db, #d3e1f0 158px, #f0f0f0 158px);
  color: #4e5d6c;
  overflow: hidden;
  border-bottom: 1px solid #a0a0a0;
  box-sizing: border-box;
  flex: none;
}
.close { margin-right: 2px; }
.shift-title { margin-left: -7px; line-height: 15px; padding-top: 1px; }
.shift-nav { margin-left: -8px; }

.market { height: 252px; display: flex; flex-direction: column; }
.market-body { height: 213px; width: 171px; display: flex; background: #fff; overflow: hidden; border-bottom: 1px solid #000; flex: none; }
.grid { width: 155px; flex: none; }
.row {
  display: grid;
  grid-template-columns: 61px 46px 47px;
  height: 20px;
  line-height: 19px;
  box-sizing: border-box;
  border-bottom: 1px solid #c0c0c0;
  text-align: right;
}
.row > span { border-right: 1px solid #c0c0c0; box-sizing: border-box; padding-right: 2px; }
.row > span:last-child { border-right: 0; }
.row .sym { text-align: left; color: #000; display: flex; align-items: center; padding: 0; letter-spacing: 0.1px; }
.sym svg { margin-left: -5px; margin-right: 3px; }
.head { height: 26px; line-height: 28px; background: linear-gradient(#fff 50%, #f1f2f4); }
.head > span { border-color: #dfe2e6; padding-right: 5px; }
.head > span:first-child { text-align: left; text-indent: -3px; }
.cyan { background: #afeeee; }
.lavender { background: #e6e6fa; }
.lemon { background: #fffacd; }
.rise { color: #0000ff; }
.fall { color: #ff0000; }
.scroll { width: 16px; background: #f0f0f0; display: flex; flex-direction: column; align-items: center; }
.arrow-up { border: 3px solid transparent; border-bottom: 4px solid #444; border-top: 0; margin-top: 7px; }
.arrow-down { border: 3px solid transparent; border-top: 4px solid #444; border-bottom: 0; margin-top: auto; margin-bottom: 6px; }
.thumb {
  margin-top: 8px;
  width: 14px;
  height: 51px;
  box-sizing: border-box;
  border: 1px solid #979797;
  border-radius: 2px;
  background: linear-gradient(90deg, #f5f5f5, #dcdcdc 50%, #c4c4c8);
  display: flex;
  flex-direction: column;
  align-items: center;
  justify-content: center;
  gap: 1px;
}
.thumb i { width: 7px; height: 1px; background: #555; }

.tabs { display: flex; height: 18px; width: 171px; color: #6d6d6d; line-height: 19px; }
.tab { padding-left: 9px; }
.tab:not(.active)::after { content: ""; display: inline-block; width: 1px; height: 11px; background: #6d6d6d; margin-left: 9px; vertical-align: -2px; }
.tab.active {
  background: #fff;
  color: #000;
  border: solid #000;
  border-width: 0 1px 1px 0;
  margin-top: -1px;
  padding-left: 3px;
  line-height: 20px;
  box-sizing: border-box;
  height: 19px;
}
.sym-tab { width: 53px; }
.nav-tab { width: 55px; }
.nav-tabs .tab { line-height: 20px; }

.navigator {
  border-top: 1px solid #a0a0a0;
  border-bottom: 1px solid #a0a0a0;
  height: 254px;
  display: flex;
  flex-direction: column;
  box-sizing: border-box;
  padding-top: 1px;
}
.tree { width: 171px; background: #fff; height: 213px; border-bottom: 1px solid #000; flex: none; padding-top: 1px; box-sizing: border-box; }
.node { display: flex; align-items: center; height: 18px; font-size: 12px; letter-spacing: -0.05px; }
.node > svg { flex: none; }
.node.root { letter-spacing: 0; }
.branch, .account {
  background: repeating-linear-gradient(#999 0 1px, transparent 1px 2px) 5px 0 / 1px 18px no-repeat;
}
.branch:last-child { background-size: 1px 9px; }
.node.account { padding-left: 26px; }
.node.account svg { position: relative; z-index: 2; }
.box {
  width: 9px;
  height: 9px;
  box-sizing: border-box;
  border: 1px solid #8c8c8c;
  margin: 2px 0 0 1px;
  background: linear-gradient(#2c3e66, #2c3e66) center / 5px 1px no-repeat, #fff;
  flex: none;
}
.box::after {
  content: "";
  display: block;
  margin: 3px 0 0 8px;
  width: 6px;
  height: 1px;
  background: repeating-linear-gradient(90deg, #999 0 1px, transparent 1px 2px);
}
.box + svg { margin-left: 7px; }
.box.plus { background: linear-gradient(#2c3e66, #2c3e66) center / 5px 1px no-repeat, linear-gradient(#2c3e66, #2c3e66) center / 1px 5px no-repeat, #fff; }
.node span { margin-left: 5px; }

.charts { flex: 1; min-width: 0; display: flex; flex-direction: column; border-left: 1px solid #404040; box-sizing: border-box; }
.chart-window { position: relative; height: 484px; border-top: 1px solid #696969; flex: none; }
.chart { display: block; }
.chart-text { font-size: 9.8px; fill: #fff; }
.chart-text .now { fill: #000; }
.note {
  position: absolute;
  left: 503px;
  top: 180px;
  width: 256px;
  height: 96px;
  box-sizing: border-box;
  border: 3px solid #ff0000;
  background: #ffff80;
  color: #003f7f;
  padding: 4px 4px;
  font: bold 16px/19px "Liberation Sans", Arial, sans-serif;
  box-shadow: 3px 3px 5px rgba(120, 120, 120, 0.4);
}
.chart-tabs { display: flex; height: 19px; border-top: 1px solid #000; margin-top: 1px; color: #6d6d6d; line-height: 17px; flex: none; }
.chart-tab { box-sizing: border-box; padding-left: 10px; position: relative; }
.chart-tab:not(.active)::after { content: ""; position: absolute; right: 0; top: 3px; width: 1px; height: 12px; background: #555; }
.chart-tab.active {
  margin-left: 2px;
  width: 80px;
  height: 19px;
  margin-top: -1px;
  padding-left: 9px;
  padding-top: 1px;
  background: #fff;
  color: #000;
  border: solid #000;
  border-width: 0 1px 1px 1px;
}
.pager { margin: 5px 3px 0 auto; }

.terminal { flex: 1; padding-left: 3px; margin-top: 4px; background: #f0f0f0; }
.alerts {
  height: 125px;
  border-top: 1px solid #808080;
  border-left: 1px solid #808080;
  width: 1261px;
  box-sizing: border-box;
  background: #fff;
  display: flex;
  flex-direction: column;
}
.alert-head {
  display: grid;
  grid-template-columns: 100px 120px 94px 94px 94px 1fr;
  height: 23px;
  line-height: 25px;
  border-bottom: 1px solid #d5d5d5;
  background: linear-gradient(#fff 45%, #f1f2f4);
  box-sizing: border-box;
  flex: none;
}
.alert-head span { border-right: 1px solid #e0e3e8; padding: 0 5px 0 6px; font-size: 11.5px; height: 22px; box-sizing: border-box; }
.counter, .limit, .timeout { text-align: right; }
.alert-body { flex: 1; }
.term-tabs { height: 17px; border-top: 1px solid #000; background: #f0f0f0; display: flex; line-height: 20px; color: #6d6d6d; flex: none; box-sizing: border-box; }
.t { box-sizing: border-box; padding-left: 9px; position: relative; }
.t:not(.current):not(.history)::after { content: ""; position: absolute; right: 0; top: 3px; width: 1px; height: 12px; background: #555; }
.t.trade { width: 51px; padding-left: 11px; }
.t.history { width: 95px; padding-left: 8px; letter-spacing: -0.1px; }
.t.current { width: 48px; margin-top: -1px; background: #fff; color: #000; border: solid #000; border-width: 0 1px; padding-left: 8px; }
.t.mailbox { width: 57px; }
.t.experts { width: 57px; padding-left: 8px; }
.t.journal { width: 55px; }
</style>
